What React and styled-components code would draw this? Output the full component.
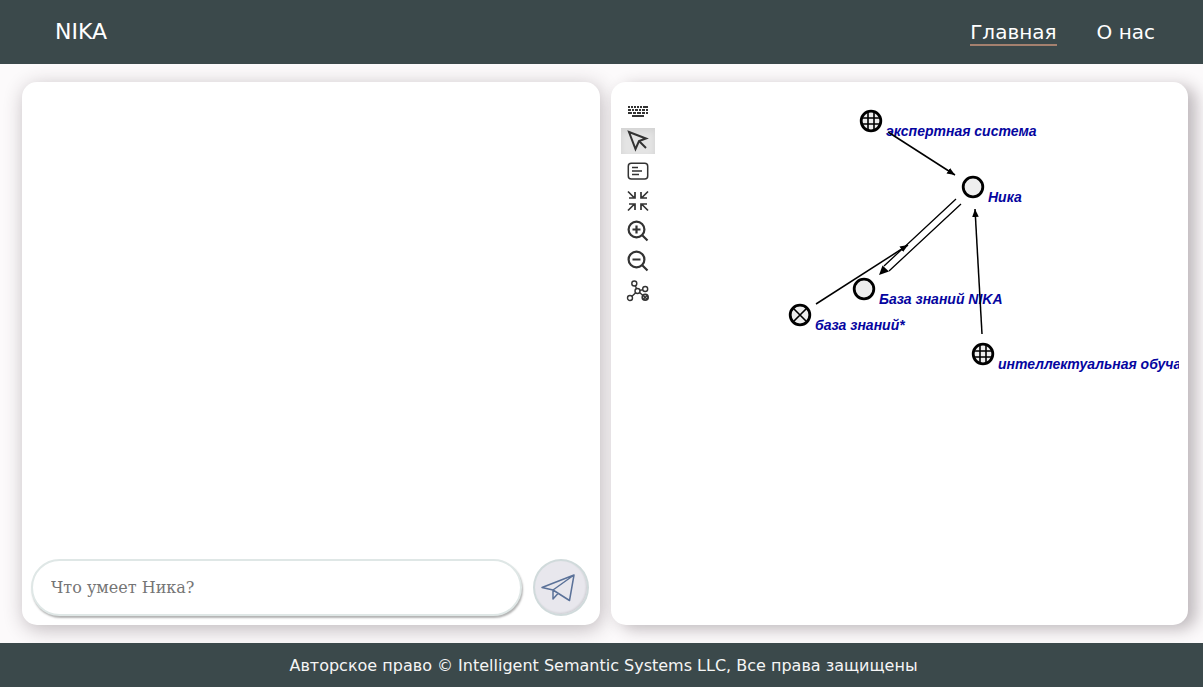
import React from 'react';
import styled, { createGlobalStyle } from 'styled-components';

const GlobalStyle = createGlobalStyle`
  *, *::before, *::after { box-sizing: border-box; }
  body {
    margin: 0;
    background: #fcfafb;
    font-family: "DejaVu Sans", sans-serif;
  }
`;

const Page = styled.div`
  display: flex;
  flex-direction: column;
  min-height: 100vh;
`;

const Header = styled.header`
  display: flex;
  align-items: center;
  justify-content: space-between;
  height: 64px;
  padding: 0 48px 0 55px;
  background: #3b494b;
  color: #fff;
`;

const Brand = styled.a`
  color: inherit;
  font-size: 22px;
  line-height: 26px;
  text-decoration: none;
`;

const Nav = styled.nav`
  display: flex;
  gap: 40px;
`;

const NavLink = styled.a`
  padding-top: 2px;
  color: #fff;
  font-size: 20px;
  line-height: 24px;
  text-decoration: none;
  border-bottom: 2px solid ${({ $active }) => ($active ? '#a5816f' : 'transparent')};
`;

const Main = styled.main`
  flex: 1;
  display: grid;
  grid-template-columns: 1fr 1fr;
  gap: 11px;
  padding: 18px 15px 18px 22px;
`;

const Card = styled.section`
  display: flex;
  min-width: 0;
  border-radius: 15px;
  background: #fff;
`;

const ChatCard = styled(Card)`
  flex-direction: column;
  padding: 9px 11px 9px 9px;
  box-shadow: 2px 4px 20px rgba(60, 45, 52, 0.32);
`;

const Messages = styled.div`
  flex: 1;
`;

const MessageForm = styled.form`
  display: flex;
  gap: 11px;
`;

const MessageInput = styled.input`
  flex: 1;
  min-width: 0;
  height: 57px;
  padding: 0 18px;
  border: 2px solid #dfe7e6;
  border-radius: 29px;
  background: #fff;
  box-shadow: 1px 2px 2px rgba(0, 0, 0, 0.3);
  font-family: "DejaVu Serif", serif;
  font-size: 16px;
  color: #222;
  outline: none;
  &::placeholder { color: #757575; opacity: 1; }
`;

const SendButton = styled.button`
  display: flex;
  align-items: center;
  justify-content: center;
  width: 56px;
  height: 57px;
  padding: 0 6px 0 0;
  border: 2px solid #d0dadb;
  border-radius: 50%;
  background: #e8e7ed;
  box-shadow: inset -1px -1px 2px rgba(0, 0, 0, 0.1);
  cursor: pointer;
`;

const GraphCard = styled(Card)`
  gap: 6px;
  padding: 16px 9px 16px 10px;
  box-shadow: 8px 4px 16px rgba(60, 45, 52, 0.32);
`;

const Toolbar = styled.div`
  display: flex;
  flex-direction: column;
  gap: 4px;
`;

const ToolButton = styled.button`
  display: flex;
  align-items: center;
  justify-content: center;
  width: 34px;
  height: 26px;
  padding: 0;
  border: 0;
  background: ${({ $active }) => ($active ? '#e4e4e4' : 'transparent')};
  box-shadow: ${({ $active }) => ($active ? 'inset 0 3px 6px rgba(0, 0, 0, 0.08)' : 'none')};
  color: #333;
  cursor: pointer;
`;

const Graph = styled.svg`
  flex: 1;
  min-width: 0;
  overflow: hidden;
`;

const NodeLabel = styled.text`
  fill: #0505a0;
  font: italic bold 14px "Liberation Sans", Arial, sans-serif;
`;

const Footer = styled.footer`
  display: flex;
  align-items: center;
  justify-content: center;
  min-height: 44px;
  padding: 2px 16px 0 20px;
  background: #3b494b;
  color: #f5f5f5;
  font-size: 16px;
  line-height: 20px;
`;

const Icon = ({ children, width = 2 }) => (
  <svg width="24" height="24" viewBox="0 0 24 24" fill="none" stroke="currentColor" strokeWidth={width} aria-hidden="true">
    {children}
  </svg>
);

const tools = [
  {
    name: 'Клавиатура',
    icon: (
      <Icon>
        <path d="M2 8h17" strokeDasharray="2 1" />
        <path d="M19 8h3" />
        <path d="M2 11h20" strokeDasharray="3 1 2 1" />
        <path d="M2 14h20" strokeDasharray="4 1 3 1" />
        <path d="M6 17h12" />
      </Icon>
    ),
  },
  {
    name: 'Выделение',
    icon: (
      <Icon>
        <path d="M3 3 20 9.500 13 12 9.500 20Z" />
        <path d="M13 12 20 19" />
      </Icon>
    ),
  },
  {
    name: 'Содержимое',
    icon: (
      <Icon width={1.5}>
        <rect x="2.300" y="4.300" width="19.400" height="15.800" rx="3" />
        <path d="M6 8.500h6M6 12h10M6 15.500h7" />
      </Icon>
    ),
  },
  {
    name: 'По размеру',
    icon: (
      <Icon width={1.7}>
        <path d="M2 2.500 8.500 9M3 9h6V3M22 2.500 15.500 9M21 9h-6V3M2 21.500 8.500 15M3 15h6v6M22 21.500 15.500 15M21 15h-6v6" />
      </Icon>
    ),
  },
  {
    name: 'Увеличить',
    icon: (
      <Icon width={2.2}>
        <circle cx="10.500" cy="10.500" r="7.900" />
        <path d="m16 16 5.500 5.500M6.500 10.500h8M10.500 6.500v8" />
      </Icon>
    ),
  },
  {
    name: 'Уменьшить',
    icon: (
      <Icon width={2.2}>
        <circle cx="10.500" cy="10.500" r="7.900" />
        <path d="m16 16 5.500 5.500M6.500 10.500h8" />
      </Icon>
    ),
  },
  {
    name: 'Граф',
    icon: (
      <Icon width={1.4}>
        <circle cx="8.300" cy="4.500" r="2.500" />
        <circle cx="11.500" cy="12" r="2.500" />
        <circle cx="19.200" cy="10" r="2.500" />
        <circle cx="4" cy="19" r="2.500" />
        <path d="m9.300 6.800 1.300 3M14 11.500l2.800-.8M9.700 13.800 6 17.300M13.500 13.500l3.500 3" />
        <circle cx="19.200" cy="18.300" r="2.900" strokeWidth="1.800" />
        <path d="m17.300 16.400 3.800 3.800M21.100 16.400l-3.800 3.800" />
      </Icon>
    ),
  },
];

const nodes = [
  { x: 210, y: 23, kind: 'class', label: 'экспертная система' },
  { x: 312, y: 89, kind: 'plain', label: 'Ника' },
  { x: 203, y: 191, kind: 'plain', label: 'База знаний NIKA' },
  { x: 139, y: 217, kind: 'relation', label: 'база знаний*' },
  { x: 322, y: 256, kind: 'class', label: 'интеллектуальная обучающая система' },
];

const arcs = [
  { x1: 227, y1: 34, x2: 294, y2: 77 },
  { x1: 155, y1: 206, x2: 247, y2: 147 },
  { x1: 321, y1: 236, x2: 314, y2: 111 },
];

const marks = {
  plain: null,
  class: 'M-3-9v18M3-9v18M-9-3h18M-9 3h18',
  relation: 'M-7-7 7 7M7-7-7 7',
};

const GraphNode = ({ x, y, kind, label }) => (
  <g transform={`translate(${x} ${y})`}>
    <circle r="9.800" fill="#eee" stroke="#000" strokeWidth="2.800" />
    {marks[kind] && <path d={marks[kind]} stroke="#000" strokeWidth="1.600" />}
    <NodeLabel x="15" y="15">{label}</NodeLabel>
  </g>
);

export default function App() {
  return (
    <Page>
      <GlobalStyle />
      <Header>
        <Brand href="#">NIKA</Brand>
        <Nav>
          <NavLink href="#" $active>Главная</NavLink>
          <NavLink href="#about">О нас</NavLink>
        </Nav>
      </Header>
      <Main>
        <ChatCard>
          <Messages />
          <MessageForm onSubmit={(event) => event.preventDefault()}>
            <MessageInput type="text" aria-label="Сообщение" placeholder="Что умеет Ника?" />
            <SendButton type="submit" aria-label="Отправить">
              <svg width="36" height="32" viewBox="0 0 36 32" fill="none" stroke="#5b7299" strokeWidth="1.500" strokeLinejoin="round" aria-hidden="true">
                <path d="M34 3 2 15.500 13 18ZM34 3 13 18 29.500 28.500ZM13 18v9l5-5.500" />
              </svg>
            </SendButton>
          </MessageForm>
        </ChatCard>
        <GraphCard>
          <Toolbar>
            {tools.map(({ name, icon }) => (
              <ToolButton key={name} type="button" aria-label={name} $active={name === 'Выделение'}>
                {icon}
              </ToolButton>
            ))}
          </Toolbar>
          <Graph>
            <defs>
              <marker id="arrow" markerUnits="userSpaceOnUse" markerWidth="10" markerHeight="8" refX="8" refY="4" orient="auto">
                <path d="M0 .7 8 4 0 7.300Z" />
              </marker>
            </defs>
            {nodes.map((node) => <GraphNode key={node.label} {...node} />)}
            {arcs.map((arc) => (
              <line key={arc.x1} {...arc} stroke="#000" strokeWidth="1.500" markerEnd="url(#arrow)" />
            ))}
            <path d="M295 101 223 168M300 106 228 173" stroke="#000" strokeWidth="1.300" />
            <path d="M218 177 221.500 167.500 228 173.500Z" />
          </Graph>
        </GraphCard>
      </Main>
      <Footer>Авторское право © Intelligent Semantic Systems LLC, Все права защищены</Footer>
    </Page>
  );
}
